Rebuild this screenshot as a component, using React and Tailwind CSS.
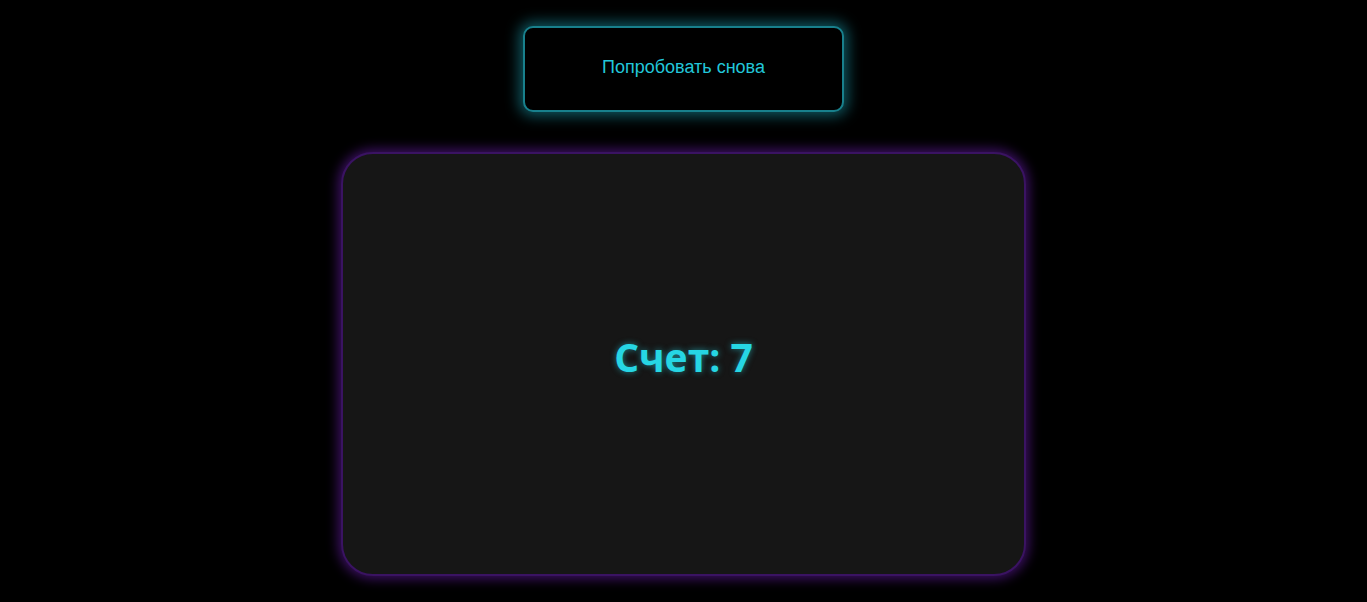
export default function App() {
  return (
    <div className="min-h-[602px] w-full bg-black flex flex-col items-center pt-[26px]">
      <button
        className="w-[321px] h-[86px] pb-[4px] rounded-[10px] bg-black border-2 border-[#18808c] shadow-[0_0_14px_4px_rgba(30,190,210,0.45)] text-[18px] text-[#22c7da]"
        style={{ fontFamily: '"Liberation Sans", Arial, sans-serif' }}
      >
        Попробовать снова
      </button>
      <div className="mt-[40px] w-[685px] h-[424px] rounded-[32px] bg-[#161616] border-2 border-[#3a1362] shadow-[0_0_12px_3px_rgba(110,30,180,0.55)] flex items-center justify-center">
        <span
          className="mb-[14px] text-[39px] font-bold text-[#26d6e4] [text-shadow:0_0_6px_rgba(38,214,228,0.55)]"
          style={{ fontFamily: '"Open Sans", "Noto Sans", sans-serif' }}
        >
          Счет: 7
        </span>
      </div>
    </div>
  );
}
